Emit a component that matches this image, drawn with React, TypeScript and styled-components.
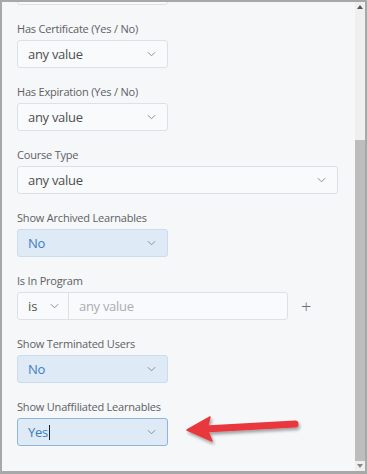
import styled, { createGlobalStyle } from 'styled-components';

const GlobalStyle = createGlobalStyle`
    html, body {
        margin: 0;
        padding: 0;
        background: #ffffff;
    }
    * {
        box-sizing: border-box;
    }
`;

type Option = { label: string; value: string; wide?: boolean; tone?: 'plain' | 'blue' | 'focus' };

const fields: Option[] = [
    { label: 'Has Certificate (Yes / No)', value: 'any value' },
    { label: 'Has Expiration (Yes / No)', value: 'any value' },
    { label: 'Course Type', value: 'any value', wide: true },
    { label: 'Show Archived Learnables', value: 'No', tone: 'blue' },
];

function Chevron() {
    return (
        <ChevronIcon viewBox="0 0 10 6" width="9" height="6">
            <path d="M1 1 L5 5 L9 1" fill="none" stroke="#8a8f96" strokeWidth="1.1" />
        </ChevronIcon>
    );
}

function Select({ value, wide, tone = 'plain', caret }: { value: string; wide?: boolean; tone?: Option['tone']; caret?: boolean }) {
    return (
        <SelectBox $wide={wide} $tone={tone}>
            <SelectValue $tone={tone}>
                {value}
                {caret && <Caret />}
            </SelectValue>
            <Chevron />
        </SelectBox>
    );
}

export default function App() {
    return (
        <>
            <GlobalStyle />
            <Frame>
                <Panel>
                    <ClippedSelect />
                    {fields.map((f) => (
                        <Field key={f.label}>
                            <Label>{f.label}</Label>
                            <Select value={f.value} wide={f.wide} tone={f.tone} />
                        </Field>
                    ))}
                    <Field>
                        <Label>Is In Program</Label>
                        <ProgramRow>
                            <Combo>
                                <Operator>
                                    <span>is</span>
                                    <Chevron />
                                </Operator>
                                <TextInput placeholder="any value" readOnly />
                            </Combo>
                            <AddButton>+</AddButton>
                        </ProgramRow>
                    </Field>
                    <Field>
                        <Label>Show Terminated Users</Label>
                        <Select value="No" tone="blue" />
                    </Field>
                    <Field>
                        <Label>Show Unaffiliated Learnables</Label>
                        <Select value="Yes" tone="focus" caret />
                    </Field>
                </Panel>
                <Scrollbar>
                    <ScrollArrow>
                        <svg viewBox="0 0 6 4" width="6" height="4">
                            <path d="M0 4 L3 0 L6 4 Z" fill="#555" />
                        </svg>
                    </ScrollArrow>
                    <Track>
                        <Thumb style={{ marginTop: 128 }} />
                    </Track>
                    <ScrollArrow>
                        <svg viewBox="0 0 6 4" width="6" height="4">
                            <path d="M0 0 L3 4 L6 0 Z" fill="#888" />
                        </svg>
                    </ScrollArrow>
                </Scrollbar>
                <Pointer viewBox="0 0 130 40" width="130" height="40">
                    <defs>
                        <filter id="sh" x="-20%" y="-40%" width="140%" height="200%">
                            <feDropShadow dx="1.5" dy="2.5" stdDeviation="1.6" floodColor="#000" floodOpacity="0.35" />
                        </filter>
                    </defs>
                    <g filter="url(#sh)" fill="#e8383d" stroke="#e8383d">
                        <path d="M25 19 L115 14" strokeWidth="7" strokeLinecap="round" fill="none" />
                        <path d="M7 20 L30 7 L27 19 L32 31 Z" strokeWidth="1.5" strokeLinejoin="round" />
                    </g>
                </Pointer>
            </Frame>
        </>
    );
}

const Frame = styled.div`
    position: relative;
    width: 367px;
    height: 474px;
    border: 2px solid #a8a8a8;
    border-bottom-width: 3px;
    display: flex;
    background: #f5f7f9;
    overflow: hidden;
    font-family: 'Open Sans', 'Liberation Sans', sans-serif;
`;

const Panel = styled.div`
    flex: 1;
    overflow: hidden;
    padding: 0 17px 0 15px;
    display: flex;
    flex-direction: column;
    gap: 16px;
`;

const ClippedSelect = styled.div`
    flex: none;
    width: 151px;
    height: 28px;
    margin-top: -25px;
    border: 1px solid #dde1e6;
    border-radius: 3px;
    background: #f9fafb;
`;

const Field = styled.div`
    display: flex;
    flex-direction: column;
    gap: 4px;
`;

const Label = styled.div`
    font-size: 11px;
    line-height: 15px;
    color: #5e6063;
    letter-spacing: -0.2px;
`;

const tones = {
    plain: { bg: '#f9fafb', border: '#dde1e6', text: '#4d4f52' },
    blue: { bg: '#deeaf6', border: '#cddcec', text: '#3d7dbf' },
    focus: { bg: '#deeaf6', border: '#8db6df', text: '#3d7dbf' },
};

const SelectBox = styled.div<{ $wide?: boolean; $tone: 'plain' | 'blue' | 'focus' }>`
    width: ${(p) => (p.$wide ? '321px' : '151px')};
    height: 28px;
    display: flex;
    align-items: center;
    justify-content: space-between;
    padding: 0 11px 0 10px;
    border: 1px solid ${(p) => tones[p.$tone].border};
    border-radius: 3px;
    background: ${(p) => tones[p.$tone].bg};
`;

const SelectValue = styled.span<{ $tone: 'plain' | 'blue' | 'focus' }>`
    display: flex;
    align-items: center;
    font-size: 13px;
    letter-spacing: -0.3px;
    color: ${(p) => tones[p.$tone].text};
`;

const Caret = styled.span`
    display: inline-block;
    width: 1px;
    height: 15px;
    margin-left: 1px;
    background: #222;
`;

const ChevronIcon = styled.svg`
    flex: none;
    display: block;
`;

const ProgramRow = styled.div`
    display: flex;
    align-items: center;
    gap: 13px;
`;

const Combo = styled.div`
    width: 271px;
    height: 28px;
    display: flex;
    border: 1px solid #dde1e6;
    border-radius: 3px;
    background: #f9fafb;
`;

const Operator = styled.div`
    width: 51px;
    display: flex;
    align-items: center;
    justify-content: space-between;
    padding: 0 9px 0 10px;
    border-right: 1px solid #dde1e6;
    font-size: 13px;
    color: #555;
`;

const TextInput = styled.input`
    flex: 1;
    min-width: 0;
    border: none;
    outline: none;
    background: transparent;
    padding: 0 10px;
    font-family: inherit;
    font-size: 13px;
    letter-spacing: -0.3px;
    &::placeholder {
        color: #a9adb2;
    }
`;

const AddButton = styled.span`
    font-size: 18px;
    font-weight: 300;
    color: #6b6f75;
    line-height: 1;
`;

const Scrollbar = styled.div`
    width: 10px;
    display: flex;
    flex-direction: column;
    background: #efefef;
`;

const ScrollArrow = styled.div`
    height: 10px;
    display: flex;
    align-items: center;
    justify-content: center;
`;

const Track = styled.div`
    flex: 1;
    display: flex;
    flex-direction: column;
`;

const Thumb = styled.div`
    flex: 1;
    background: #bdbdbd;
`;

const Pointer = styled.svg`
    position: absolute;
    left: 178px;
    top: 408px;
`;
